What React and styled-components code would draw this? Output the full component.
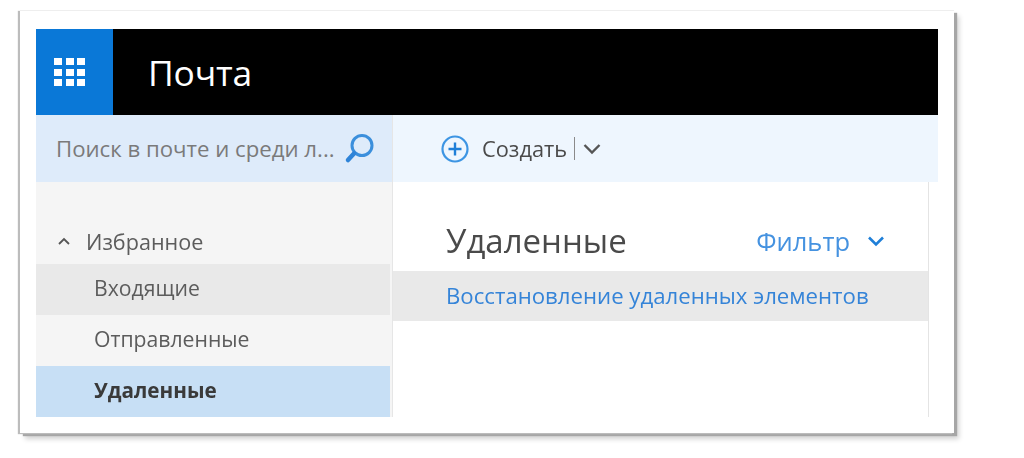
import styled, { createGlobalStyle } from "styled-components";

const GlobalStyle = createGlobalStyle`
  html, body {
    height: 100%;
    margin: 0;
    padding: 0;
    background: #fff;
    font-family: "Open Sans", "Noto Sans", sans-serif;
  }
  #root {
    height: 100%;
    overflow: hidden;
  }
`;

const Frame = styled.div`
  box-sizing: border-box;
  width: 934px;
  height: 423px;
  margin: 10px 0 0 20px;
  padding: 18px 16px 16px 16px;
  background: #fff;
  border-top: 1px solid #eeeeee;
  box-shadow: -2px 1px 1px #bcbcbc, 3px 3px 1px #a6a6a6, 5px 6px 5px rgba(0, 0, 0, 0.18);
`;

const Window = styled.div`
  display: flex;
  flex-direction: column;
  height: 388px;
  filter: blur(0.7px);
`;

const Header = styled.div`
  display: flex;
  align-items: center;
  height: 86px;
  background: #000;
  flex-shrink: 0;
`;

const AppTile = styled.div`
  display: flex;
  align-items: center;
  box-sizing: border-box;
  width: 77px;
  height: 100%;
  padding-left: 18px;
  background: #0a78d7;
`;

const Waffle = styled.div`
  display: grid;
  grid-template-columns: repeat(3, 8px);
  grid-auto-rows: 7px;
  gap: 3.5px;
`;

const Dot = styled.span`
  background: #fff;
`;

const AppName = styled.div`
  margin-left: 35px;
  color: #fff;
  font-size: 35.4px;
  line-height: 40px;
  letter-spacing: -0.2px;
`;

const Body = styled.div`
  display: flex;
  flex: 1;
  min-height: 0;
`;

const Sidebar = styled.div`
  display: flex;
  flex-direction: column;
  width: 357px;
  background: #f5f5f5;
  border-right: 1px solid #e6e6e6;
  box-sizing: border-box;
`;

const SearchBox = styled.div`
  display: flex;
  align-items: center;
  height: 67px;
  padding: 0 17px 0 20px;
  background: #deebfa;
`;

const Placeholder = styled.div`
  flex: 1;
  color: #7a7a7a;
  font-size: 22.2px;
  white-space: nowrap;
`;

const GroupTitle = styled.div`
  display: flex;
  align-items: center;
  gap: 15px;
  height: 82px;
  padding: 36px 0 0 21px;
  box-sizing: border-box;
  color: #5c5c5c;
  font-size: 21.6px;
`;

const NavItem = styled.div`
  display: flex;
  align-items: center;
  box-sizing: border-box;
  height: 51px;
  margin-right: 2px;
  padding: 0 0 4px 58px;
  color: ${(p) => (p.$selected ? "#3a3a3a" : "#5c5c5c")};
  background: ${(p) => (p.$selected ? "#c7dff5" : p.$hover ? "#e9e9e9" : "transparent")};
  font-size: ${(p) => (p.$selected ? "20.7px" : "21.2px")};
  font-weight: ${(p) => (p.$selected ? 700 : 400)};
`;

const Main = styled.div`
  display: flex;
  flex-direction: column;
  flex: 1;
  min-width: 0;
`;

const Toolbar = styled.div`
  display: flex;
  align-items: center;
  height: 67px;
  padding-left: 48px;
  background: #eef6fe;
  flex-shrink: 0;
`;

const CreateLabel = styled.span`
  margin-left: 13px;
  color: #4a4a4a;
  font-size: 21.8px;
`;

const Divider = styled.span`
  width: 1px;
  height: 23px;
  margin: 0 8px 0 7px;
  background: #8a8a8a;
`;

const Content = styled.div`
  flex: 1;
  width: 536px;
  box-sizing: border-box;
  border-right: 1px solid #e4e4e4;
`;

const TitleRow = styled.div`
  display: flex;
  align-items: center;
  height: 89px;
  padding: 28px 43px 0 53px;
  box-sizing: border-box;
`;

const FolderTitle = styled.div`
  flex: 1;
  color: #4a4a4a;
  font-size: 33px;
`;

const FilterLabel = styled.div`
  margin-right: 17px;
  color: #4592e0;
  font-size: 25.5px;
`;

const RestoreRow = styled.div`
  display: flex;
  align-items: center;
  box-sizing: border-box;
  height: 50px;
  padding: 0 0 2px 53px;
  background: #e9e9e9;
  color: #3584d8;
  font-size: 22.2px;
  white-space: nowrap;
`;

const Icon = styled.svg`
  display: block;
  flex-shrink: 0;
`;

const App = () => {
  return (
    <>
      <GlobalStyle />
      <Frame>
        <Window>
          <Header>
            <AppTile>
              <Waffle>
                {Array.from({ length: 9 }).map((_, i) => (
                  <Dot key={i} />
                ))}
              </Waffle>
            </AppTile>
            <AppName>Почта</AppName>
          </Header>
          <Body>
            <Sidebar>
              <SearchBox>
                <Placeholder>Поиск в почте и среди л...</Placeholder>
                <Icon width="31" height="31" viewBox="0 0 31 31" fill="none">
                  <circle cx="18" cy="12.5" r="10" stroke="#3b8fdc" strokeWidth="3" />
                  <path d="M10 20.5 L4 27" stroke="#2f84d8" strokeWidth="4.5" strokeLinecap="round" />
                </Icon>
              </SearchBox>
              <GroupTitle>
                <Icon width="14" height="10" viewBox="0 0 14 10" fill="none">
                  <path d="M2 8 L7 3 L12 8" stroke="#555" strokeWidth="1.8" />
                </Icon>
                Избранное
              </GroupTitle>
              <NavItem $hover>Входящие</NavItem>
              <NavItem>Отправленные</NavItem>
              <NavItem $selected>Удаленные</NavItem>
            </Sidebar>
            <Main>
              <Toolbar>
                <Icon width="28" height="28" viewBox="0 0 28 28" fill="none">
                  <circle cx="14" cy="14" r="12.5" stroke="#3d95e3" strokeWidth="2.2" />
                  <path d="M7.5 14 H20.5 M14 7.5 V20.5" stroke="#1f7fd8" strokeWidth="2.4" />
                </Icon>
                <CreateLabel>Создать</CreateLabel>
                <Divider />
                <Icon width="18" height="12" viewBox="0 0 18 12" fill="none">
                  <path d="M1.5 2 L9 9.5 L16.5 2" stroke="#555" strokeWidth="2.4" />
                </Icon>
              </Toolbar>
              <Content>
                <TitleRow>
                  <FolderTitle>Удаленные</FolderTitle>
                  <FilterLabel>Фильтр</FilterLabel>
                  <Icon width="18" height="12" viewBox="0 0 18 12" fill="none">
                    <path d="M2 2.5 L9 9.5 L16 2.5" stroke="#1f7fd8" strokeWidth="2.6" />
                  </Icon>
                </TitleRow>
                <RestoreRow>Восстановление удаленных элементов</RestoreRow>
              </Content>
            </Main>
          </Body>
        </Window>
      </Frame>
    </>
  );
};

export default App;
